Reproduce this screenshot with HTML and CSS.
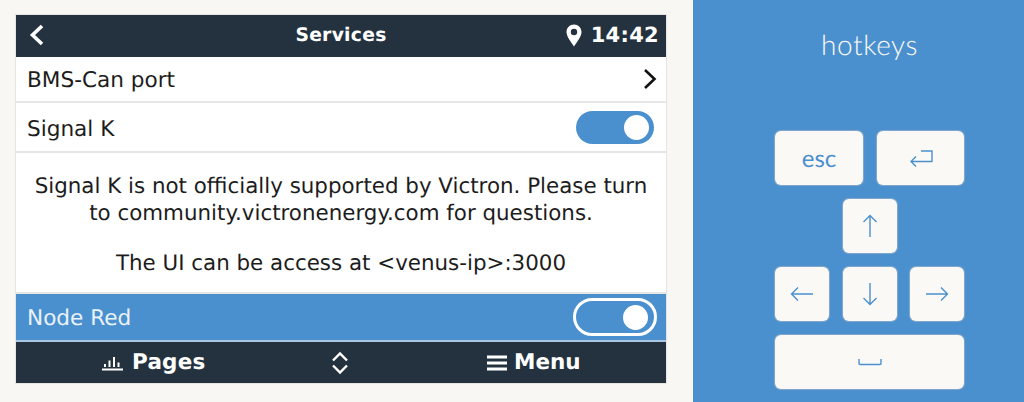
FILE: index.html
```html
<!DOCTYPE html>
<html lang="en">
<head>
<meta charset="utf-8">
<title>Services</title>
<link rel="stylesheet" href="styles.css">
</head>
<body>
<main class="stage">
  <div class="screen">
    <header class="bar top">
      <svg class="back" width="16" height="22" viewBox="0 0 16 22"><path d="M13 2 L3.500 11 L13 20" fill="none" stroke="#fff" stroke-width="3.600"/></svg>
      <span class="title">Services</span>
      <span class="clock">
        <svg width="16" height="23" viewBox="0 0 16 23"><path fill-rule="evenodd" d="M8 0.500C3.800 0.500 0.500 3.800 0.500 8C0.500 12.500 5 18 8 22.500C11 18 15.500 12.500 15.500 8C15.500 3.800 12.200 0.500 8 0.500ZM8 4.800A3.200 3.200 0 1 1 8 11.200A3.200 3.200 0 1 1 8 4.800Z" fill="#fff"/></svg>
        14:42
      </span>
    </header>
    <div class="row r1">
      <span class="label">BMS-Can port</span>
      <svg width="14" height="22" viewBox="0 0 14 22"><path d="M2 2 L11.500 11 L2 20" fill="none" stroke="#111" stroke-width="2.600"/></svg>
    </div>
    <div class="row r2">
      <span class="label low">Signal K</span>
      <span class="toggle on"><i class="knob"></i></span>
    </div>
    <div class="note">
      <p>Signal K is not officially supported by Victron. Please turn<br>to community.victronenergy.com for questions.</p>
      <p>The UI can be access at &lt;venus-ip&gt;:3000</p>
    </div>
    <div class="row sel">
      <span class="label">Node Red</span>
      <span class="toggle outline"><i class="knob"></i></span>
    </div>
    <footer class="bar bottom">
      <span class="foot">
        <svg width="21" height="16" viewBox="0 0 21 16"><path d="M0 14.500H21M3 12V9M7.500 12V5.500M12 12V2M16.500 12V7.500" stroke="#fff" stroke-width="2" fill="none"/></svg>
        Pages
      </span>
      <svg class="updown" width="18" height="24" viewBox="0 0 18 24"><path d="M2 9.500 L9 2.500 L16 9.500M2 14.500 L9 21.500 L16 14.500" fill="none" stroke="#fff" stroke-width="2.400"/></svg>
      <span class="foot menu">
        <svg width="20" height="16" viewBox="0 0 20 16"><path d="M0 2H20M0 8H20M0 14H20" stroke="#fff" stroke-width="3.200"/></svg>
        Menu
      </span>
    </footer>
  </div>
</main>
<aside class="side">
  <h2>hotkeys</h2>
  <div class="keys">
    <div class="keyrow">
      <div class="key wide esc">esc</div>
      <div class="key wide narrow">
        <svg width="24" height="18" viewBox="0 0 24 18"><path d="M12 2H23V12.500H2M7 7.500L2 12.500L7 17.500" fill="none" stroke="#4b90ce" stroke-width="1.400"/></svg>
      </div>
    </div>
    <div class="keyrow center">
      <div class="key">
        <svg width="16" height="24" viewBox="0 0 16 24"><path d="M8 23V1.500M1.500 8L8 1.500L14.500 8" fill="none" stroke="#4b90ce" stroke-width="1.400"/></svg>
      </div>
    </div>
    <div class="keyrow">
      <div class="key">
        <svg width="24" height="16" viewBox="0 0 24 16"><path d="M23 8H1.500M8 1.500L1.500 8L8 14.500" fill="none" stroke="#4b90ce" stroke-width="1.400"/></svg>
      </div>
      <div class="key">
        <svg width="16" height="24" viewBox="0 0 16 24"><path d="M8 1V22.500M1.500 16L8 22.500L14.500 16" fill="none" stroke="#4b90ce" stroke-width="1.400"/></svg>
      </div>
      <div class="key">
        <svg width="24" height="16" viewBox="0 0 24 16"><path d="M1 8H22.500M16 1.500L22.500 8L16 14.500" fill="none" stroke="#4b90ce" stroke-width="1.400"/></svg>
      </div>
    </div>
    <div class="keyrow">
      <div class="key space">
        <svg width="24" height="8" viewBox="0 0 24 8"><path d="M1 1V5.500Q1 6.500 2 6.500H22Q23 6.500 23 5.500V1" fill="none" stroke="#4b90ce" stroke-width="1.400"/></svg>
      </div>
    </div>
  </div>
</aside>
</body>
</html>
```
FILE: styles.css
```css
* { box-sizing: border-box; }
html, body { margin: 0; height: 100%; }
body {
  display: flex;
  width: 1024px;
  height: 402px;
  overflow: hidden;
  background: #f9f7f3;
  font-family: "DejaVu Sans", sans-serif;
  text-rendering: geometricPrecision;
}
.stage { width: 693px; padding: 14px 0 0 15px; }
.screen {
  width: 652px;
  height: 370px;
  border: 1px solid #e6e4e1;
  background: #fff;
  display: flex;
  flex-direction: column;
}
.bar {
  background: #243240;
  color: #fff;
  font-weight: 700;
  display: flex;
  align-items: center;
}
.top { height: 42px; padding: 0 7px 2px 13px; font-size: 18.700px; position: relative; flex: none; }
.title { position: absolute; left: 0; right: 0; padding-top: 1px; text-align: center; letter-spacing: 0.3px; }
.clock { margin-left: auto; display: flex; align-items: center; gap: 9px; font-size: 21px; letter-spacing: 0.300px; }
.row {
  display: flex;
  align-items: center;
  justify-content: space-between;
  padding: 0 11px;
  font-size: 21.600px;
  color: #1c1c1c;
  border-bottom: 2px solid #e6e6e6;
  flex: none;
}
.label { padding-top: 2px; }
.label.low { padding-top: 4px; }
.r1 { height: 46px; padding-right: 9px; }
.r2 { height: 50px; padding: 1px 12px 0 11px; }
.toggle {
  width: 78px;
  height: 33px;
  border-radius: 17px;
  display: flex;
  align-items: center;
  justify-content: flex-end;
  padding-right: 5px;
}
.toggle.on { background: #4b90ce; }
.knob { width: 25px; height: 25px; border-radius: 50%; background: #fff; display: block; }
.note {
  height: 141px;
  border-bottom: 2px solid #e6e6e6;
  text-align: center;
  font-size: 21.400px;
  line-height: 27px;
  color: #1c1c1c;
  padding-top: 20px;
  flex: none;
}
.note p { margin: 0 0 23px; }
.row.sel {
  height: 48px;
  background: #4b90ce;
  color: #eaf2fa;
  border-bottom: 2px solid #a9c6e0;
  padding-right: 9px;
}
.toggle.outline { width: 84px; height: 38px; border-radius: 19px; border: 3px solid #fff; padding-right: 6px; }
.bottom { flex: 1; font-size: 21.500px; position: relative; }
.foot { position: absolute; display: flex; align-items: center; gap: 9px; left: 86px; letter-spacing: 0.200px; }
.foot.menu { left: 471px; gap: 7px; letter-spacing: 0; }
.updown { position: absolute; left: 315px; }
.side {
  width: 331px;
  background: #4b90ce;
  display: flex;
  flex-direction: column;
  align-items: center;
  padding-left: 22px;
}
.side h2 {
  margin: 26px 0 0;
  height: 105px;
  font-family: Lato, sans-serif;
  font-weight: 300;
  font-size: 28px;
  line-height: 36px;
  letter-spacing: 0.600px;
  color: #fbf9f5;
}
.keys {
  width: 189px;
  display: flex;
  flex-direction: column;
  gap: 14px;
}
.keyrow { display: flex; justify-content: space-between; }
.keyrow.center { justify-content: center; }
.key {
  width: 54px;
  height: 54px;
  background: #fbf9f5;
  border-radius: 6px;
  box-shadow: 0 0 1px 1px rgba(190, 195, 200, 0.5);
  display: flex;
  align-items: center;
  justify-content: center;
  color: #4b90ce;
}
.key.wide { width: 88px; }
.key.narrow { width: 87px; }
.esc { font-family: Lato, sans-serif; font-size: 24px; }
.space { width: 100%; }
```
